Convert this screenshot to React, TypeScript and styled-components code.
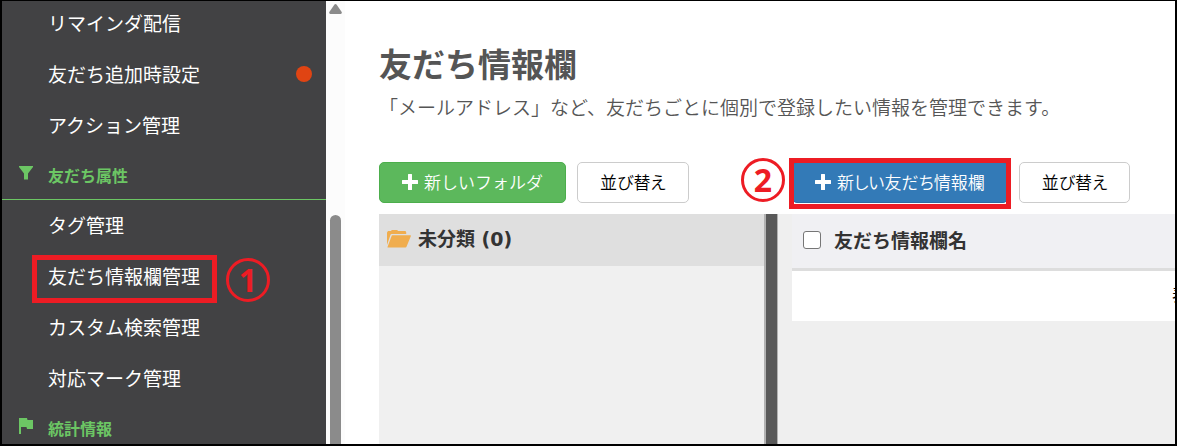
import React from 'react';
import styled, { createGlobalStyle, css } from 'styled-components';

const GlobalStyle = createGlobalStyle`
  *, *::before, *::after { box-sizing: border-box; }
  body {
    margin: 0;
    font-family: "Noto Sans CJK JP", "Noto Sans", sans-serif;
    color: #333;
  }
  h1, p, ul { margin: 0; padding: 0; }
  ul { list-style: none; }
`;

const Frame = styled.div`
  display: flex;
  height: 100vh;
  overflow: hidden;
  border: solid #000;
  border-width: 1px 2px 2px;
  background: #fff;
`;

const Sidebar = styled.aside`
  flex: none;
  width: 324px;
  overflow: hidden;
  background: #424244;
`;

const Nav = styled.nav`
  margin-top: -3px;
`;

const NavItem = styled.li`
  position: relative;
  display: flex;
  align-items: center;
  height: 51px;
  padding: 0 14px 2px 46px;
`;

const NavLink = styled.a`
  flex: 1;
  color: #fff;
  font-size: 19px;
  line-height: 28px;
  text-decoration: none;
`;

const Dot = styled.span`
  width: 16px;
  height: 16px;
  border-radius: 50%;
  background: #e04413;
`;

const NavGroup = styled.div<{ $ruled?: boolean }>`
  display: flex;
  align-items: center;
  gap: 15px;
  height: 49px;
  padding-left: 17px;
  color: #6cc664;
  font-size: 16px;
  font-weight: 700;
  line-height: 24px;
  border-bottom: 1px solid ${p => (p.$ruled ? '#6cc664' : 'transparent')};
  svg { margin-bottom: 5px; }
`;

const highlight = css`
  content: "";
  position: absolute;
  border: 5px solid #ed1c24;
  pointer-events: none;
`;

const MarkedItem = styled(NavItem)`
  &::after {
    ${highlight}
    top: 4px;
    left: 30px;
    width: 185px;
    height: 48px;
  }
`;

const Step = styled.span`
  position: absolute;
  display: flex;
  align-items: center;
  justify-content: center;
  width: 44px;
  height: 44px;
  border: 3px solid #ed1c24;
  border-radius: 50%;
  color: #ed1c24;
  font-family: "Open Sans", "Noto Sans", sans-serif;
  font-size: 32px;
  font-weight: 700;
  line-height: 38px;
`;

const NavStep = styled(Step)`
  top: 7px;
  left: 224px;
`;

const ToolbarStep = styled(Step)`
  top: -4px;
  right: calc(100% + 7px);
`;

const ScrollTrack = styled.div`
  display: flex;
  flex: none;
  flex-direction: column;
  align-items: center;
  width: 19px;
  padding-top: 3px;
  background: #fcfcfc;
`;

const ScrollThumb = styled.div`
  flex: 1;
  width: 11px;
  margin-top: 201px;
  border-radius: 6px 6px 0 0;
  background: #8b8b8b;
`;

const Main = styled.main`
  display: flex;
  flex: 1;
  flex-direction: column;
  min-width: 0;
  padding: 38px 0 0 34px;
  overflow: hidden;
`;

const Title = styled.h1`
  color: #555;
  font-size: 33px;
  line-height: 48px;
`;

const Lead = styled.p`
  margin: 6px 0 41px;
  color: #555;
  font-size: 19px;
  font-weight: 350;
  line-height: 28px;
  white-space: nowrap;
`;

const Workspace = styled.div`
  display: grid;
  flex: 1;
  grid-template-columns: 385px 14px minmax(0, 1fr);
  grid-template-rows: 52px 1fr;
`;

const Toolbar = styled.div<{ $wide?: boolean }>`
  position: relative;
  display: flex;
  align-items: flex-start;
  gap: 11px;
  grid-column: ${p => (p.$wide ? '2 / 4' : '1')};
  padding: ${p => (p.$wide ? '0 0 0 28px' : '0')};
`;

const tones = {
  green: 'background: #5cb85c; border-color: #4cae4c; color: #fff; font-feature-settings: normal;',
  blue: 'background: #337ab7; border-color: #2e6da4; color: #fff;',
  plain: 'background: #fff; border-color: #ccc; color: #000;',
};

const Button = styled.button<{ $tone: keyof typeof tones }>`
  display: flex;
  align-items: center;
  gap: 6px;
  height: 41px;
  padding: 0 22px 2px;
  border: 1px solid;
  border-radius: 5px;
  font-family: inherit;
  font-size: 17px;
  font-weight: 350;
  font-feature-settings: "palt";
  line-height: 24px;
  white-space: nowrap;
  ${p => tones[p.$tone]}
`;

const Marked = styled.div`
  position: relative;
  &::after {
    ${highlight}
    inset: -4px -3px -6px;
  }
`;

const FolderPane = styled.section`
  background: #f0f0f0;
`;

const Folder = styled.div`
  display: flex;
  align-items: center;
  gap: 7px;
  height: 52px;
  padding: 0 8px 3px;
  background: #dfdfdf;
  font-family: "DejaVu Sans", "Noto Sans CJK JP", sans-serif;
  font-size: 19px;
  font-weight: 700;
  line-height: 28px;
`;

const Splitter = styled.div`
  border: solid #b2b2b2;
  border-width: 0 1px 0 2px;
  background: #595959;
`;

const TablePane = styled.section`
  padding-left: 14px;
  overflow: hidden;
  background: #efefef;
`;

const Table = styled.table`
  width: 777px;
  border-collapse: collapse;
`;

const HeadCell = styled.th`
  height: 55px;
  padding: 0 11px 2px;
  border-bottom: 3px solid #ddd;
  background: #f0f0f3;
  font-size: 19px;
  line-height: 28px;
  text-align: left;
`;

const CheckLabel = styled.label`
  display: flex;
  align-items: center;
  gap: 13px;
`;

const Checkbox = styled.input`
  appearance: none;
  width: 18px;
  height: 18px;
  margin: 0;
  border: 1px solid #767676;
  border-radius: 3px;
  background: #fff;
`;

const BodyCell = styled.td`
  height: 52px;
  padding: 0 0 4px;
  background: #fff;
  color: #000;
  font-size: 17px;
  line-height: 24px;
  text-align: center;
`;

const FilterIcon = () => (
  <svg width="14" height="14" viewBox="0 0 14 14" fill="currentColor" aria-hidden="true">
    <path d="M0 0h14v1L9 7.500V13.500H5V7.500L0 1z" />
  </svg>
);

const FlagIcon = () => (
  <svg width="14" height="16" viewBox="0 0 14 16" fill="currentColor" aria-hidden="true">
    <path d="M0 0h8l.5 2H14v9H8l-.5-2H2v7H0z" />
  </svg>
);

const PlusIcon = () => (
  <svg width="16" height="16" viewBox="0 0 16 16" fill="currentColor" aria-hidden="true">
    <path d="M6.500 0h3a.5.5 0 0 1 .5.5V6h5.500a.5.5 0 0 1 .5.5v3a.5.5 0 0 1-.5.5H10v5.500a.5.5 0 0 1-.5.5h-3a.5.5 0 0 1-.5-.5V10H.5a.5.5 0 0 1-.5-.5v-3A.5.5 0 0 1 .5 6H6V.5a.5.5 0 0 1 .5-.5z" />
  </svg>
);

const FolderIcon = () => (
  <svg width="24" height="18" viewBox="0 0 24 18" fill="#f0ad4e" aria-hidden="true">
    <path d="M0 15V2.500L1 1h3l.8-1h5.400L11 1h7.500l.7 1.200V4H4.500L3.600 4.600z" />
    <path d="M5.300 5.300H23.500q.6 0 .4.600L19.500 16.800q-.3.700-1 .7H1q-.7 0-.4-.7L4.600 5.900q.2-.6.7-.6z" />
  </svg>
);

const ArrowUp = () => (
  <svg width="13" height="10" viewBox="0 0 13 10" fill="#8b8b8b" aria-hidden="true">
    <path d="M5.300.8Q6.500-.6 7.700.8L12.700 8q.6 1.800-1 2H1.300Q-.3 9.800.3 8z" />
  </svg>
);

const Entry = ({ text, dot }: { text: string; dot?: boolean }) => (
  <NavItem>
    <NavLink href="#">{text}</NavLink>
    {dot && <Dot />}
  </NavItem>
);

export default function App() {
  return (
    <>
      <GlobalStyle />
      <Frame>
        <Sidebar>
          <Nav>
            <ul>
              <Entry text="リマインダ配信" />
              <Entry text="友だち追加時設定" dot />
              <Entry text="アクション管理" />
            </ul>
            <NavGroup $ruled><FilterIcon />友だち属性</NavGroup>
            <ul>
              <Entry text="タグ管理" />
              <MarkedItem>
                <NavLink href="#">友だち情報欄管理</NavLink>
                <NavStep>1</NavStep>
              </MarkedItem>
              <Entry text="カスタム検索管理" />
              <Entry text="対応マーク管理" />
            </ul>
            <NavGroup><FlagIcon />統計情報</NavGroup>
          </Nav>
        </Sidebar>
        <ScrollTrack>
          <ArrowUp />
          <ScrollThumb />
        </ScrollTrack>
        <Main>
          <Title>友だち情報欄</Title>
          <Lead>「メールアドレス」など、友だちごとに個別で登録したい情報を管理できます。</Lead>
          <Workspace>
            <Toolbar>
              <Button type="button" $tone="green"><PlusIcon />新しいフォルダ</Button>
              <Button type="button" $tone="plain">並び替え</Button>
            </Toolbar>
            <Toolbar $wide>
              <Marked>
                <Button type="button" $tone="blue"><PlusIcon />新しい友だち情報欄</Button>
                <ToolbarStep>2</ToolbarStep>
              </Marked>
              <Button type="button" $tone="plain">並び替え</Button>
            </Toolbar>
            <FolderPane>
              <Folder><FolderIcon />未分類 (0)</Folder>
            </FolderPane>
            <Splitter />
            <TablePane>
              <Table>
                <thead>
                  <tr>
                    <HeadCell scope="col">
                      <CheckLabel><Checkbox type="checkbox" />友だち情報欄名</CheckLabel>
                    </HeadCell>
                  </tr>
                </thead>
                <tbody>
                  <tr><BodyCell>表</BodyCell></tr>
                </tbody>
              </Table>
            </TablePane>
          </Workspace>
        </Main>
      </Frame>
    </>
  );
}
